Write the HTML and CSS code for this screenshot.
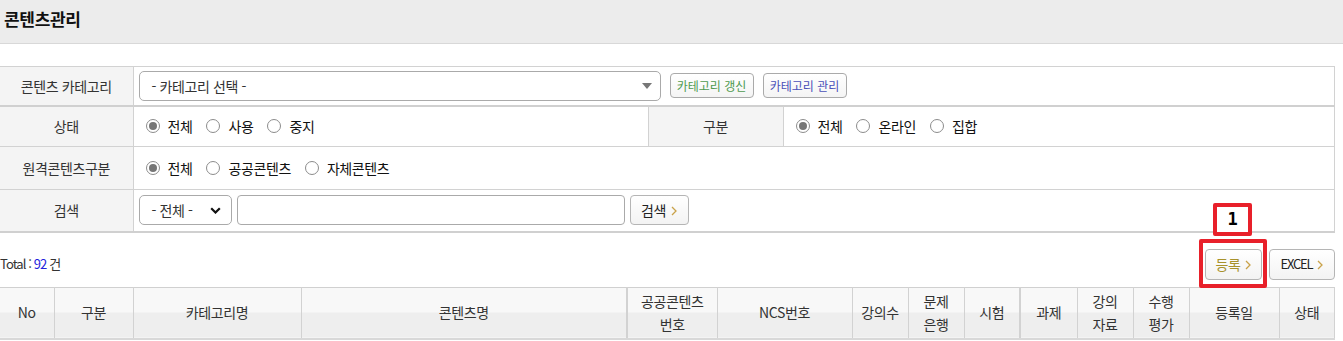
FILE: index.html
```html
<!DOCTYPE html>
<html lang="ko">
<head>
	<meta charset="UTF-8">
	<title>콘텐츠관리</title>
	<link rel="stylesheet" href="styles.css">
</head>
<body>
	<div class="page-title">
		<h2>콘텐츠관리</h2>
	</div>
	<div class="content">
		<table class="search">
			<colgroup>
				<col style="width:133px">
				<col style="width:515px">
				<col style="width:135px">
				<col>
			</colgroup>
			<tr class="row-cate">
				<th>콘텐츠 카테고리</th>
				<td colspan="3">
					<div class="field">
						<div class="select select-wide">
							<span>- 카테고리 선택 -</span>
							<svg width="10" height="6" viewBox="0 0 10 6"><path d="M0 0h10L5 6z" fill="#777"/></svg>
						</div>
						<a href="javascript:;" class="btn-sm green">카테고리 갱신</a>
						<a href="javascript:;" class="btn-sm blue">카테고리 관리</a>
					</div>
				</td>
			</tr>
			<tr class="row-state">
				<th>상태</th>
				<td>
					<div class="radios">
						<label><i class="radio on"></i>전체</label>
						<label><i class="radio"></i>사용</label>
						<label><i class="radio"></i>중지</label>
					</div>
				</td>
				<th>구분</th>
				<td>
					<div class="radios">
						<label><i class="radio on"></i>전체</label>
						<label><i class="radio"></i>온라인</label>
						<label><i class="radio"></i>집합</label>
					</div>
				</td>
			</tr>
			<tr class="row-remote">
				<th>원격콘텐츠구분</th>
				<td colspan="3">
					<div class="radios">
						<label><i class="radio on"></i>전체</label>
						<label><i class="radio"></i>공공콘텐츠</label>
						<label><i class="radio"></i>자체콘텐츠</label>
					</div>
				</td>
			</tr>
			<tr class="row-search">
				<th>검색</th>
				<td colspan="3">
					<div class="field">
						<div class="select select-kind">
							<span>- 전체 -</span>
							<svg width="11" height="7" viewBox="0 0 11 7"><path d="M1.2 1.2l4.3 4.3 4.3-4.3" fill="none" stroke="#111" stroke-width="2.2"/></svg>
						</div>
						<input type="text" class="keyword">
						<a href="javascript:;" class="btn">검색<svg class="arr" width="6" height="10" viewBox="0 0 6 10"><path d="M1 1l4 4-4 4" fill="none" stroke="#c9a24a" stroke-width="1.3"/></svg></a>
					</div>
				</td>
			</tr>
		</table>

		<div class="list-top">
			<p class="total">Total : <em>92</em> 건</p>
			<div class="btns">
				<span class="mark">
					<a href="javascript:;" class="btn reg">등록<svg class="arr" width="6" height="10" viewBox="0 0 6 10"><path d="M1 1l4 4-4 4" fill="none" stroke="#c9a24a" stroke-width="1.3"/></svg></a>
					<span class="mark-box"></span>
					<span class="mark-num">1</span>
				</span>
				<a href="javascript:;" class="btn excel">EXCEL<svg class="arr" width="6" height="10" viewBox="0 0 6 10"><path d="M1 1l4 4-4 4" fill="none" stroke="#c9a24a" stroke-width="1.3"/></svg></a>
			</div>
		</div>

		<table class="list">
			<colgroup>
				<col style="width:54px">
				<col style="width:79px">
				<col style="width:168px">
				<col style="width:326px">
				<col style="width:90px">
				<col style="width:135px">
				<col style="width:56px">
				<col style="width:56px">
				<col style="width:56px">
				<col style="width:57px">
				<col style="width:56px">
				<col style="width:56px">
				<col style="width:90px">
				<col>
			</colgroup>
			<thead>
				<tr>
					<th>No</th>
					<th>구분</th>
					<th>카테고리명</th>
					<th>콘텐츠명</th>
					<th class="bold-line">공공콘텐츠<br>번호</th>
					<th>NCS번호</th>
					<th>강의수</th>
					<th>문제<br>은행</th>
					<th>시험</th>
					<th class="bold-line">과제</th>
					<th>강의<br>자료</th>
					<th>수행<br>평가</th>
					<th>등록일</th>
					<th>상태</th>
				</tr>
			</thead>
		</table>
	</div>
</body>
</html>
```

FILE: styles.css
```css
*{margin: 0; padding: 0; box-sizing: border-box;}
body{font-family: "Noto Sans CJK KR", "Noto Sans", sans-serif; font-size: 14px; color: #222; letter-spacing: -0.4px; background: #fff;}
a{text-decoration: none; color: inherit;}
table{border-collapse: collapse; table-layout: fixed;}

.page-title{height: 44px; background: #ececec; border-bottom: 1px solid #d8d8d8; padding: 7px 0 0 4px;}
.page-title h2{font-size: 17px; line-height: 24px; font-weight: bold; color: #111; letter-spacing: -0.3px;}

.content{width: 1335px; padding-top: 22px;}

.search{width: 1335px; border-top: 1px solid #d2d2d2; border-right: 1px solid #d2d2d2; border-bottom: 2px solid #d0d0d0;}
.search th{background: #f4f4f4; font-weight: normal; color: #333; text-align: center; border-right: 1px solid #d2d2d2; border-bottom: 1px solid #d2d2d2; line-height: 20px;}
.search td{border-bottom: 1px solid #d2d2d2; border-right: 1px solid #d2d2d2;}
.search .row-cate{height: 39px;}
.search .row-cate th, .search .row-cate td{border-bottom: 2px solid #d0d0d0;}
.search .row-state{height: 41px;}
.search .row-remote{height: 43px;}
.search .row-search{height: 42px;}
.search .row-search th, .search .row-search td{border-bottom: 0;}

.field{display: flex; align-items: center; padding-left: 5px;}
.select{display: flex; align-items: center; justify-content: space-between; height: 30px; border: 1px solid #aaa; border-radius: 5px; background: #fff; padding: 0 8px 0 12px; color: #333; line-height: 20px;}
.select-wide{width: 522px;}
.select-kind{width: 93px; padding-right: 10px;}
.btn-sm{display: inline-flex; align-items: center; justify-content: center; width: 84px; height: 25px; margin-left: 9px; border: 1px solid #aaa; border-radius: 4px; background: linear-gradient(#fff, #f4f4f4); font-size: 12px; letter-spacing: 0; line-height: 16px;}
.btn-sm.green{color: #4f9a4f;}
.btn-sm.blue{color: #4a50b8;}
.keyword{width: 388px; height: 30px; margin-left: 5px; border: 1px solid #aaa; border-radius: 4px; background: #fff;}

.btn{display: inline-flex; align-items: center; justify-content: center; height: 31px; border: 1px solid #b5b5b5; border-radius: 4px; background: linear-gradient(#fff, #f3f3f3); color: #222; line-height: 20px;}
.btn .arr{margin-left: 5px; margin-top: 1px;}
.row-search .btn{width: 59px; height: 30px; margin-left: 5px;}

.radios{display: flex; align-items: center; padding-left: 12px; line-height: 20px;}
.radios label{display: flex; align-items: center; margin-right: 14px; color: #111;}
.radio{width: 14px; height: 14px; border: 1px solid #8c8c8c; border-radius: 50%; background: #fff; margin-right: 8px; display: flex; align-items: center; justify-content: center;}
.radio.on::after{content: ""; width: 8px; height: 8px; border-radius: 50%; background: #767676;}

.list-top{display: flex; align-items: center; justify-content: space-between; height: 54px; padding-top: 9px;}
.total{font-size: 13px; letter-spacing: -0.9px; color: #333; line-height: 20px;}
.total em{font-style: normal; color: #2222dd;}
.btns{display: flex; align-items: center;}
.btn.reg{width: 57px; color: #a8922c;}
.btn.excel{width: 66px; margin-left: 7px; letter-spacing: -1.2px; font-size: 13px;}

.mark{position: relative; display: inline-flex;}
.mark-box{position: absolute; left: -6px; top: -10px; width: 68px; height: 49px; border: 4px solid #e8202a; border-radius: 2px;}
.mark-num{position: absolute; left: 8px; top: -46px; width: 39px; height: 33px; border: 4px solid #e8202a; border-radius: 2px; background: #fff; font-family: "DejaVu Sans Mono", monospace; font-weight: bold; font-size: 17px; line-height: 25px; text-align: center; color: #000; letter-spacing: 0;}

.list{width: 1335px; border-top: 1px solid #d0d0d0; border-right: 1px solid #d2d2d2;}
.list th{height: 52px; background: linear-gradient(#f8f8f8 50%, #eeeeee 50%); border-right: 1px solid #d2d2d2; border-bottom: 2px solid #d8d8d8; font-weight: normal; color: #333; line-height: 23px; text-align: center;}
.list th.bold-line{border-left: 2px solid #d2d2d2;}
```
